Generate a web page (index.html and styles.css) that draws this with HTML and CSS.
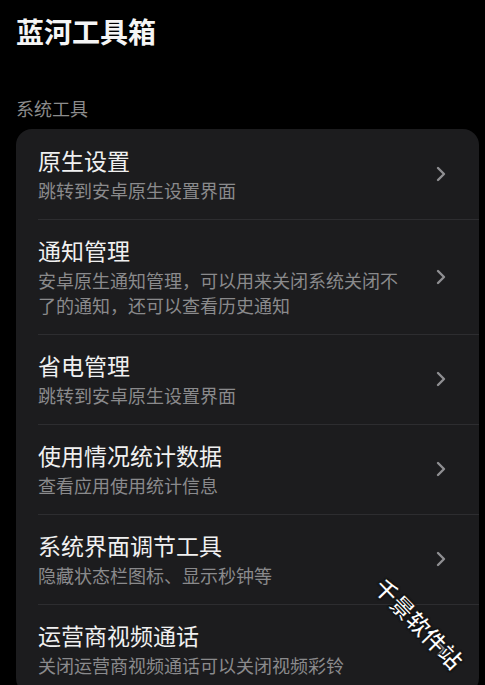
FILE: index.html
```html
<!DOCTYPE html>
<html lang="zh-CN">
<head>
<meta charset="utf-8">
<title>蓝河工具箱</title>
<link rel="stylesheet" href="styles.css">
</head>
<body>
<div class="page">
  <h1 class="app-title">蓝河工具箱</h1>
  <div class="section-label">系统工具</div>
  <div class="card">
    <div class="row">
      <div class="text">
        <div class="title">原生设置</div>
        <div class="sub">跳转到安卓原生设置界面</div>
      </div>
      <svg class="chev" width="10" height="16" viewBox="0 0 10 16"><path d="M2 2 L8 8 L2 14" fill="none" stroke="#8f8f92" stroke-width="2.4" stroke-linecap="round" stroke-linejoin="round"/></svg>
    </div>
    <div class="row">
      <div class="text">
        <div class="title">通知管理</div>
        <div class="sub">安卓原生通知管理，可以用来关闭系统关闭不了的通知，还可以查看历史通知</div>
      </div>
      <svg class="chev" width="10" height="16" viewBox="0 0 10 16"><path d="M2 2 L8 8 L2 14" fill="none" stroke="#8f8f92" stroke-width="2.4" stroke-linecap="round" stroke-linejoin="round"/></svg>
    </div>
    <div class="row">
      <div class="text">
        <div class="title">省电管理</div>
        <div class="sub">跳转到安卓原生设置界面</div>
      </div>
      <svg class="chev" width="10" height="16" viewBox="0 0 10 16"><path d="M2 2 L8 8 L2 14" fill="none" stroke="#8f8f92" stroke-width="2.4" stroke-linecap="round" stroke-linejoin="round"/></svg>
    </div>
    <div class="row">
      <div class="text">
        <div class="title">使用情况统计数据</div>
        <div class="sub">查看应用使用统计信息</div>
      </div>
      <svg class="chev" width="10" height="16" viewBox="0 0 10 16"><path d="M2 2 L8 8 L2 14" fill="none" stroke="#8f8f92" stroke-width="2.4" stroke-linecap="round" stroke-linejoin="round"/></svg>
    </div>
    <div class="row">
      <div class="text">
        <div class="title">系统界面调节工具</div>
        <div class="sub">隐藏状态栏图标、显示秒钟等</div>
      </div>
      <svg class="chev" width="10" height="16" viewBox="0 0 10 16"><path d="M2 2 L8 8 L2 14" fill="none" stroke="#8f8f92" stroke-width="2.4" stroke-linecap="round" stroke-linejoin="round"/></svg>
    </div>
    <div class="row">
      <div class="text">
        <div class="title">运营商视频通话</div>
        <div class="sub">关闭运营商视频通话可以关闭视频彩铃</div>
      </div>
      <svg class="chev" width="10" height="16" viewBox="0 0 10 16"><path d="M2 2 L8 8 L2 14" fill="none" stroke="#8f8f92" stroke-width="2.4" stroke-linecap="round" stroke-linejoin="round"/></svg>
    </div>
  </div>
</div>
<div class="watermark">千景软件站</div>
</body>
</html>
```

FILE: styles.css
```css
* { box-sizing: border-box; }
html, body {
  margin: 0;
  padding: 0;
  background: #000;
  overflow: hidden;
}
body {
  font-family: "Noto Sans CJK SC", "Noto Sans", sans-serif;
  color: #f2f2f2;
  width: 485px;
  height: 685px;
  position: relative;
}
.page {
  padding: 13px 6px 0 16px;
}
.app-title {
  margin: 0;
  font-size: 28px;
  line-height: 36px;
  font-weight: 700;
  color: #f5f5f5;
}
.section-label {
  margin-top: 47px;
  font-size: 18px;
  line-height: 24px;
  color: #8c8c8c;
}
.card {
  margin-top: 9px;
  background: #1c1c1e;
  border-radius: 16px;
  overflow: hidden;
}
.row {
  display: flex;
  align-items: center;
  padding: 16px 33px 16px 22px;
  position: relative;
}
.row + .row::before {
  content: "";
  position: absolute;
  left: 22px;
  right: 0;
  top: 0;
  height: 1px;
  background: #2d2d30;
}
.text {
  flex: 0 0 374px;
  width: 374px;
  margin-right: auto;
}
.title {
  font-size: 23px;
  line-height: 30px;
  font-weight: 400;
  color: #f0f0f0;
}
.sub {
  margin-top: 3px;
  font-size: 18px;
  line-height: 25px;
  color: #8a8a8c;
}
.chev {
  flex: 0 0 auto;
  display: block;
}
.watermark {
  position: absolute;
  left: 362px;
  top: 611px;
  transform: rotate(46deg);
  font-size: 23px;
  line-height: 24px;
  font-weight: 700;
  color: #fff;
  -webkit-text-stroke: 0.6px #000;
  text-shadow: 0 0 2px #000, 0 0 2px #000;
}
```
